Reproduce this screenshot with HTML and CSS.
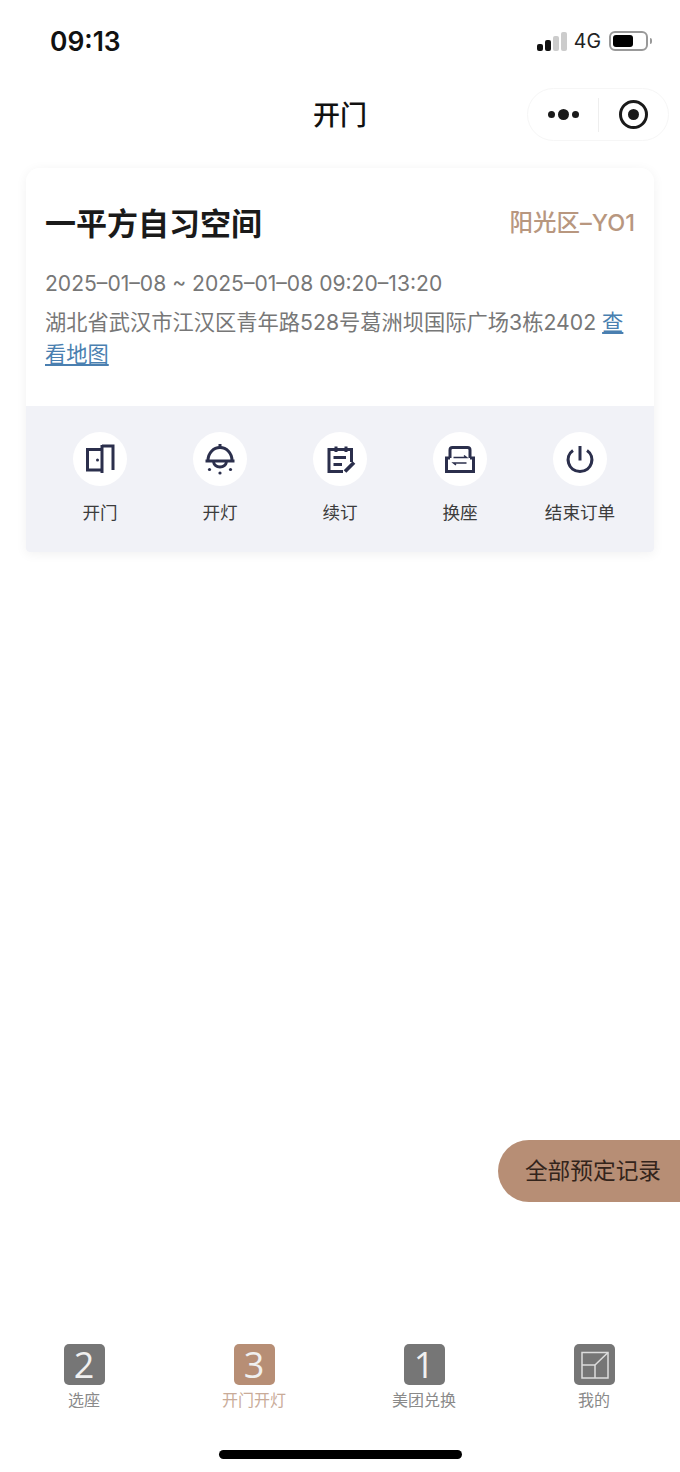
FILE: index.html
```html
<!DOCTYPE html>
<html lang="zh-CN">
<head>
  <meta charset="UTF-8">
  <title>开门</title>
  <link rel="stylesheet" href="styles.css">
</head>
<body>
  <div class="page">
    <div class="status-bar">
      <span class="time">09:13</span>
      <div class="status-right">
        <div class="signal">
          <i class="bar b1"></i><i class="bar b2"></i><i class="bar b3"></i><i class="bar b4"></i>
        </div>
        <span class="net">4G</span>
        <div class="battery"><div class="battery-fill"></div></div>
        <div class="battery-nub"></div>
      </div>
    </div>

    <div class="nav-bar">
      <h1 class="nav-title">开门</h1>
      <div class="capsule">
        <div class="capsule-more"><i class="dot"></i><i class="dot big"></i><i class="dot"></i></div>
        <div class="capsule-line"></div>
        <div class="capsule-close"><i></i></div>
      </div>
    </div>

    <div class="card">
      <div class="card-info">
        <div class="card-head">
          <span class="store">一平方自习空间</span>
          <span class="seat">阳光区–YO1</span>
        </div>
        <p class="date">2025–01–08 ~ 2025–01–08 09:20–13:20</p>
        <p class="address">湖北省武汉市江汉区青年路528号葛洲坝国际广场3栋2402 <a class="map-link" href="#">查看地图</a></p>
      </div>
      <div class="actions">
        <div class="action">
          <div class="action-icon">
            <svg viewBox="0 0 54 54">
              <path d="M29 17.500H14.500V38H29"/>
              <path d="M29 14H40V38"/>
              <path d="M29 13V41"/>
              <circle class="fill" cx="24.500" cy="28" r="1.500"/>
            </svg>
          </div>
          <span>开门</span>
        </div>
        <div class="action">
          <div class="action-icon">
            <svg viewBox="0 0 54 54">
              <path d="M27 12V15"/>
              <path d="M15 28.500C15 21 20.500 15.500 27 15.500S39 21 39 28.500"/>
              <path d="M12.500 29H41.500"/>
              <path d="M20.500 30C22 36.500 32 36.500 33.500 30"/>
              <circle class="fill" cx="16.500" cy="37.500" r="1.600"/>
              <circle class="fill" cx="27" cy="41" r="1.600"/>
              <circle class="fill" cx="37.500" cy="37.500" r="1.600"/>
            </svg>
          </div>
          <span>开灯</span>
        </div>
        <div class="action">
          <div class="action-icon">
            <svg viewBox="0 0 54 54">
              <path d="M30 39.500H16V17.500H38.500V30"/>
              <path d="M23 14.500V20M33 14.500V20"/>
              <path d="M20.500 25.500H33M20.500 32.500H29"/>
              <path class="pen" d="M32 39.500L41 30.500"/>
            </svg>
          </div>
          <span>续订</span>
        </div>
        <div class="action">
          <div class="action-icon">
            <svg viewBox="0 0 54 54">
              <path d="M17 26V18Q17 15.500 19.500 15.500H34.500Q37 15.500 37 18V26"/>
              <path d="M17 26H13.500V39.500H40.500V26H37"/>
              <path class="thin" d="M20.500 25.500H33.500L31 23.500M33.500 31H20.500L23 33"/>
            </svg>
          </div>
          <span>换座</span>
        </div>
        <div class="action">
          <div class="action-icon">
            <svg viewBox="0 0 54 54">
              <path d="M20 18.500C11 24.500 15 39.500 27 39.500S43 24.500 34 18.500"/>
              <path d="M27 14V28.500"/>
            </svg>
          </div>
          <span>结束订单</span>
        </div>
      </div>
    </div>

    <button class="records-btn">全部预定记录</button>

    <div class="tab-bar">
      <div class="tab">
        <div class="tab-icon">2</div>
        <span>选座</span>
      </div>
      <div class="tab active">
        <div class="tab-icon">3</div>
        <span>开门开灯</span>
      </div>
      <div class="tab">
        <div class="tab-icon">1</div>
        <span>美团兑换</span>
      </div>
      <div class="tab">
        <div class="tab-icon">
          <svg viewBox="0 0 41 41">
            <path d="M8 8.500H34V34H8Z"/>
            <path d="M8 21H21V34"/>
            <path d="M21 21L34 8.500"/>
          </svg>
        </div>
        <span>我的</span>
      </div>
    </div>

    <div class="home-bar"></div>
  </div>
</body>
</html>
```

FILE: styles.css
```css
body {
  margin: 0;
  background: #fff;
  font-family: Inter, 'Noto Sans CJK SC', sans-serif;
}

.page {
  position: relative;
  width: 680px;
  height: 1472px;
  display: flex;
  flex-direction: column;
  overflow: hidden;
}

/* status bar */
.status-bar {
  height: 80px;
  padding: 2px 28px 0 50px;
  display: flex;
  justify-content: space-between;
  align-items: center;
  box-sizing: border-box;
}

.time {
  font-size: 26.400px;
  font-weight: 600;
  color: #111;
}

.status-right {
  display: flex;
  align-items: center;
}

.signal {
  display: flex;
  align-items: flex-end;
  gap: 2px;
  height: 19px;
  margin-right: 7px;
  margin-left: -1px;
}

.bar {
  width: 6px;
  border-radius: 2px;
  background: #111;
}

.b1 { height: 7px; }
.b2 { height: 11px; }
.b3 { height: 15px; background: #ccc; }
.b4 { height: 19px; background: #ccc; }

.net {
  font-size: 19.500px;
  color: #222;
  margin-right: 8px;
}

.battery {
  width: 39px;
  height: 20px;
  border: 2px solid #999;
  border-radius: 6px;
  padding: 2px;
  box-sizing: border-box;
}

.battery-fill {
  width: 20px;
  height: 100%;
  background: #000;
  border-radius: 3px;
}

.battery-nub {
  width: 2px;
  height: 6px;
  margin-left: 2px;
  background: #999;
  border-radius: 0 2px 2px 0;
}

/* nav bar */
.nav-bar {
  position: relative;
  height: 70px;
  display: flex;
  justify-content: center;
  align-items: center;
  padding-bottom: 4px;
  box-sizing: border-box;
}

.nav-title {
  margin: 0;
  font-size: 27px;
  font-weight: 500;
  color: #111;
}

.capsule {
  position: absolute;
  right: 11px;
  top: 8px;
  width: 142px;
  height: 53px;
  display: flex;
  align-items: center;
  border: 1px solid #f6f6f6;
  border-radius: 27px;
  box-sizing: border-box;
}

.capsule-more {
  width: 70px;
  display: flex;
  justify-content: center;
  align-items: center;
  gap: 3px;
}

.dot {
  width: 7px;
  height: 7px;
  border-radius: 50%;
  background: #1a1a1a;
}

.dot.big {
  width: 11px;
  height: 11px;
}

.capsule-line {
  width: 1px;
  height: 34px;
  background: #eee;
}

.capsule-close {
  flex: 1;
  display: flex;
  justify-content: center;
}

.capsule-close i {
  width: 29px;
  height: 29px;
  border: 3.500px solid #1a1a1a;
  border-radius: 50%;
  box-sizing: border-box;
  display: flex;
  justify-content: center;
  align-items: center;
}

.capsule-close i::after {
  content: "";
  width: 11px;
  height: 11px;
  border-radius: 50%;
  background: #1a1a1a;
}

/* order card */
.card {
  margin: 18px 26px 0;
  border-radius: 14px 14px 4px 4px;
  box-shadow: 0 2px 12px rgba(0, 0, 0, 0.06);
  overflow: hidden;
}

.card-info {
  height: 238px;
  padding: 31px 19px 0;
  box-sizing: border-box;
  background: #fff;
}

.card-head {
  display: flex;
  justify-content: space-between;
  align-items: center;
  height: 44px;
}

.store {
  font-size: 31px;
  font-weight: 700;
  color: #1a1a1a;
}

.seat {
  font-size: 23.500px;
  font-weight: 500;
  color: #b8977f;
}

.date {
  margin: 25px 0 0;
  font-size: 21.100px;
  line-height: 32px;
  color: #777;
}

.address {
  margin: 6px 0 0;
  font-size: 21.260px;
  line-height: 32px;
  color: #777;
}

.map-link {
  color: #4a7fb0;
  text-decoration: underline;
}

.actions {
  height: 146px;
  padding: 26px 14px 0;
  box-sizing: border-box;
  background: #f1f2f7;
  display: grid;
  grid-template-columns: repeat(5, 120px);
}

.action {
  display: flex;
  flex-direction: column;
  align-items: center;
  font-size: 17.600px;
  color: #3c3c3c;
}

.action-icon {
  width: 54px;
  height: 54px;
  margin-bottom: 13px;
  border-radius: 50%;
  background: #fff;
}

.action-icon svg {
  display: block;
  width: 54px;
  height: 54px;
  fill: none;
  stroke: #2b2f4c;
  stroke-width: 3;
}

.action-icon .fill {
  fill: #2b2f4c;
  stroke: none;
}

.action-icon .thin {
  stroke-width: 1.500;
}

.action-icon .pen {
  stroke-width: 3.800;
}

/* floating button */
.records-btn {
  position: absolute;
  right: 0;
  top: 1140px;
  width: 182px;
  height: 62px;
  padding: 0 0 4px 8px;
  border: none;
  border-radius: 31px 0 0 31px;
  background: #b78e75;
  color: #33241b;
  font-family: inherit;
  font-size: 22.700px;
  text-align: center;
}

/* tab bar */
.tab-bar {
  margin-top: auto;
  margin-left: -1px;
  display: grid;
  grid-template-columns: repeat(4, 170px);
}

.tab {
  display: flex;
  flex-direction: column;
  align-items: center;
  font-size: 16px;
  line-height: 22px;
  color: #8a8a8a;
}

.tab.active {
  color: #c9ab98;
}

.tab-icon {
  width: 41px;
  height: 41px;
  margin-bottom: 4px;
  border-radius: 5px;
  background: #767676;
  color: #f0f0f0;
  font-family: 'Open Sans', sans-serif;
  font-size: 36px;
  font-weight: 400;
  line-height: 41px;
  text-align: center;
}

.tab.active .tab-icon {
  background: #b78e75;
}

.tab-icon svg {
  display: block;
  width: 41px;
  height: 41px;
  fill: none;
  stroke: #ddd;
  stroke-width: 1.500;
}

.home-bar {
  width: 243px;
  height: 9px;
  margin: 39px auto 13px;
  border-radius: 5px;
  background: #000;
}
```
